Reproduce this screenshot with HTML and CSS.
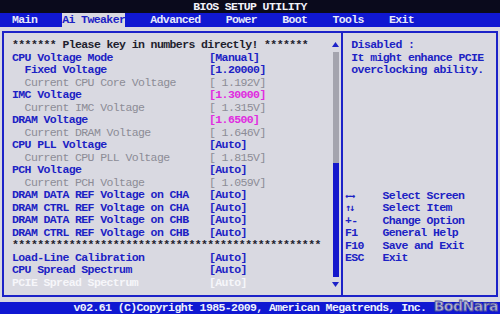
FILE: index.html
```html
<!DOCTYPE html>
<html lang="en">

<head>
    <meta charset="UTF-8">
    <title>BIOS SETUP UTILITY</title>
    <link rel="stylesheet" href="styles.css">
</head>

<body>
    <div class="screen">
        <div class="title">BIOS SETUP UTILITY</div>
        <ul class="menu">
            <li>Main</li>
            <li class="active">Ai Tweaker</li>
            <li>Advanced</li>
            <li>Power</li>
            <li>Boot</li>
            <li>Tools</li>
            <li>Exit</li>
        </ul>
        <div class="frame">
            <div class="settings">
                <div class="list">
                    <div class="note">******* Please key in numbers directly! *******</div>
                    <div class="row"><span>CPU Voltage Mode</span><span>[Manual]</span></div>
                    <div class="row sub"><span>Fixed Voltage</span><span>[1.20000]</span></div>
                    <div class="row sub info"><span>Current CPU Core Voltage</span><span>[ 1.192V]</span></div>
                    <div class="row"><span>IMC Voltage</span><span class="pink">[1.30000]</span></div>
                    <div class="row sub info"><span>Current IMC Voltage</span><span>[ 1.315V]</span></div>
                    <div class="row"><span>DRAM Voltage</span><span class="pink">[1.6500]</span></div>
                    <div class="row sub info"><span>Current DRAM Voltage</span><span>[ 1.646V]</span></div>
                    <div class="row"><span>CPU PLL Voltage</span><span>[Auto]</span></div>
                    <div class="row sub info"><span>Current CPU PLL Voltage</span><span>[ 1.815V]</span></div>
                    <div class="row"><span>PCH Voltage</span><span>[Auto]</span></div>
                    <div class="row sub info"><span>Current PCH Voltage</span><span>[ 1.059V]</span></div>
                    <div class="row"><span>DRAM DATA REF Voltage on CHA</span><span>[Auto]</span></div>
                    <div class="row"><span>DRAM CTRL REF Voltage on CHA</span><span>[Auto]</span></div>
                    <div class="row"><span>DRAM DATA REF Voltage on CHB</span><span>[Auto]</span></div>
                    <div class="row"><span>DRAM CTRL REF Voltage on CHB</span><span>[Auto]</span></div>
                    <div class="note">*************************************************</div>
                    <div class="row"><span>Load-Line Calibration</span><span>[Auto]</span></div>
                    <div class="row"><span>CPU Spread Spectrum</span><span>[Auto]</span></div>
                    <div class="row selected"><span>PCIE Spread Spectrum</span><span>[Auto]</span></div>
                </div>
                <div class="scrollbar">
                    <svg class="arrow" width="7" height="12" viewBox="0 0 7 12"><polygon points="3.5,3 7,8 0,8"/></svg>
                    <div class="track"><div class="thumb"></div></div>
                    <svg class="arrow" width="7" height="12" viewBox="0 0 7 12"><polygon points="0,4 7,4 3.5,9"/></svg>
                </div>
            </div>
            <div class="help">
                <div class="desc">
                    <p>Disabled :</p>
                    <p>It might enhance PCIE</p>
                    <p>overclocking ability.</p>
                </div>
                <ul class="keys">
                    <li><span class="key">←→</span><span>Select Screen</span></li>
                    <li><span class="key">↑↓</span><span>Select Item</span></li>
                    <li><span>+-</span><span>Change Option</span></li>
                    <li><span>F1</span><span>General Help</span></li>
                    <li><span>F10</span><span>Save and Exit</span></li>
                    <li><span>ESC</span><span>Exit</span></li>
                </ul>
            </div>
        </div>
        <div class="footer">v02.61 (C)Copyright 1985-2009, American Megatrends, Inc.</div>
        <div class="watermark">BodNara</div>
    </div>
</body>

</html>
```

FILE: styles.css
```css
body {
    margin: 0;
    background: #d9d9e1;
}

.screen {
    position: relative;
    width: 500px;
    height: 314px;
    overflow: hidden;
    display: flex;
    flex-direction: column;
    background: #d9d9e1;
    font-family: "Liberation Mono", "DejaVu Sans Mono", monospace;
    font-size: 11.5px;
    font-weight: bold;
    letter-spacing: -0.6px;
    color: #1c22c4;
}

/* top bar */
.title {
    height: 13px;
    line-height: 13px;
    background: #0a0a1c;
    color: #f2f2fa;
    text-align: center;
}

.menu {
    list-style: none;
    margin: 0;
    padding: 0 0 0 12px;
    height: 14px;
    line-height: 14px;
    display: flex;
    gap: 25px;
    background: #1018d2;
    color: #e6e8fa;
}

.menu .active {
    background: #d9d9e1;
    color: #1c22c4;
}

/* main frame */
.frame {
    margin: 4px 2px 0;
    height: 262px;
    border: 2px solid #1c22c8;
    display: flex;
}

.settings {
    width: 337px;
    padding-top: 6px;
    display: flex;
    border-right: 2px solid #1c22c8;
}

.list {
    flex: 1;
    padding-left: 8px;
    line-height: 12.5px;
}

.note {
    color: #1e1e2e;
    white-space: pre;
}

.row {
    display: grid;
    grid-template-columns: 197px auto;
    white-space: pre;
}

.row.sub span:first-child {
    padding-left: 12.6px;
}

.row.info {
    color: #8c8c96;
    font-weight: normal;
}

.row .pink {
    color: #e02ce0;
}

.row.selected {
    color: #f6f6fa;
}

.scrollbar {
    width: 7px;
    margin-right: 2px;
    display: flex;
    flex-direction: column;
    align-items: center;
}

.scrollbar .arrow {
    fill: #1c22c8;
}

.track {
    width: 6px;
    height: 225px;
    margin: 1px 0;
    background: #a4a4ae;
    display: flex;
    flex-direction: column;
    justify-content: flex-end;
}

.thumb {
    height: 114px;
    background: #1418cc;
}

/* help pane */
.help {
    flex: 1;
    padding: 6px 0 0 2px;
    line-height: 12.5px;
}

.desc p {
    margin: 0;
    padding-left: 6.3px;
}

.keys {
    list-style: none;
    margin: 113px 0 0;
    padding: 0;
}

.keys li {
    display: grid;
    grid-template-columns: 37.5px auto;
    white-space: pre;
}

.keys .key {
    font-family: "DejaVu Sans Mono", monospace;
    font-size: 10px;
    letter-spacing: -2px;
}

.footer {
    margin-top: 5px;
    height: 12px;
    line-height: 12px;
    background: #1018d2;
    color: #eef0fc;
    text-align: center;
    white-space: pre;
}

.watermark {
    position: absolute;
    right: 2px;
    bottom: 0;
    font-family: "DejaVu Sans", sans-serif;
    font-size: 14px;
    line-height: 16px;
    font-weight: bold;
    letter-spacing: -0.5px;
    color: #b4b6d6;
    -webkit-text-stroke: 0.8px #50529a;
}
```
